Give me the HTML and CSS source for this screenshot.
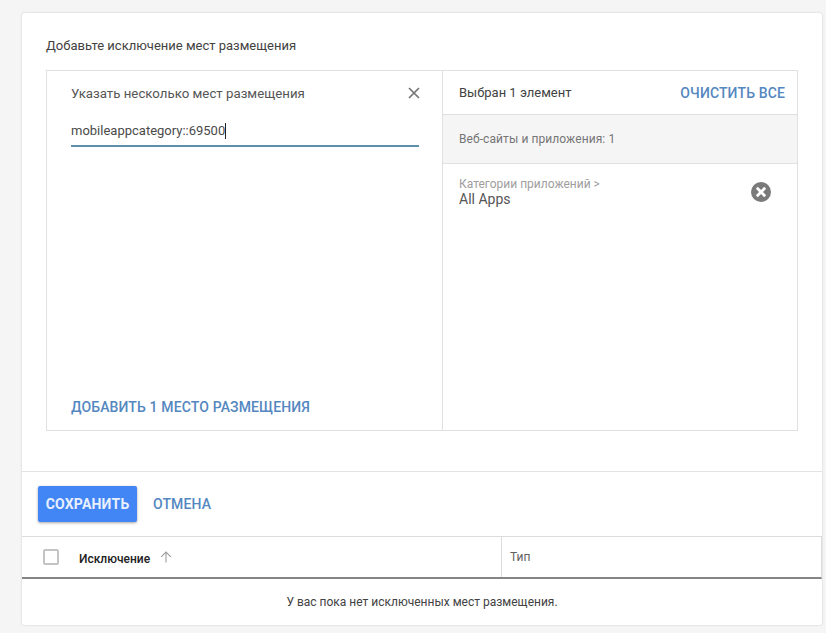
FILE: index.html
```html
<!DOCTYPE html>
<html lang="ru">
<head>
<meta charset="utf-8">
<title>Исключение мест размещения</title>
<link rel="stylesheet" href="styles.css">
</head>
<body>
<main class="card">
  <section class="editor">
    <h1 class="title">Добавьте исключение мест размещения</h1>
    <div class="panel">
      <div class="left">
        <div class="left-head">
          <span>Указать несколько мест размещения</span>
          <svg class="close" width="12" height="12" viewBox="0 0 12 12"><path d="M1 1l10 10M11 1L1 11" stroke="#757575" stroke-width="1.7" fill="none"/></svg>
        </div>
        <div class="field"><span>mobileappcategory::69500</span><i class="caret"></i></div>
        <a class="link add">ДОБАВИТЬ 1 МЕСТО РАЗМЕЩЕНИЯ</a>
      </div>
      <div class="right">
        <div class="right-head">
          <span>Выбран 1 элемент</span>
          <a class="link">ОЧИСТИТЬ ВСЕ</a>
        </div>
        <div class="group">Веб-сайты и приложения: 1</div>
        <div class="item">
          <div class="item-text">
            <div class="crumb">Категории приложений &gt;</div>
            <div class="name">All Apps</div>
          </div>
          <svg class="remove" width="20" height="20" viewBox="0 0 20 20"><circle cx="10" cy="10" r="10" fill="#7a7a7a"/><path d="M5.800 5.800l8.400 8.400M14.200 5.800l-8.400 8.400" stroke="#fff" stroke-width="2.800" fill="none"/></svg>
        </div>
      </div>
    </div>
  </section>
  <div class="actions">
    <button class="save" type="button">СОХРАНИТЬ</button>
    <a class="link cancel">ОТМЕНА</a>
  </div>
  <div class="table">
    <div class="thead">
      <div class="th first">
        <span class="check"></span>
        <span class="th-label">Исключение</span>
        <svg class="sort" width="12" height="12" viewBox="0 0 12 12"><path d="M6 11.500V1M1.200 5.800L6 1l4.800 4.800" stroke="#9e9e9e" stroke-width="1.100" fill="none"/></svg>
      </div>
      <div class="th second">Тип</div>
    </div>
    <div class="empty">У вас пока нет исключенных мест размещения.</div>
  </div>
</main>
</body>
</html>
```
FILE: styles.css
```css
* { box-sizing: border-box; }
html, body { margin: 0; height: 100%; }
body {
  background: #f5f5f5;
  padding: 13px 4px 0 22px;
  font-family: Roboto, "Liberation Sans", sans-serif;
  color: #424242;
  overflow: hidden;
}
.card {
  width: 800px;
  height: 612px;
  background: #fff;
  box-shadow: 0 0 2px rgba(0,0,0,.22);
  display: flex;
  flex-direction: column;
  border-radius: 2px;
}
.editor {
  height: 459px;
  padding: 25px 24px 0 24px;
  border-bottom: 1px solid #e3e3e3;
}
.title {
  margin: 0;
  font-size: 13px;
  line-height: 15px;
  font-weight: 400;
  color: #424242;
  height: 32px;
}
.panel {
  width: 752px;
  height: 361px;
  border: 1px solid #e0e0e0;
  display: flex;
}
.left {
  width: 396px;
  border-right: 1px solid #e0e0e0;
  padding: 14px 23px 15px 24px;
  display: flex;
  flex-direction: column;
}
.left-head {
  display: flex;
  justify-content: space-between;
  align-items: center;
  height: 16px;
  font-size: 13.25px;
  color: #555;
}
.close { margin-right: -1px; }
.field {
  margin-top: 14px;
  height: 32px;
  border-bottom: 2px solid #5f8ea8;
  font-size: 13px;
  line-height: 16px;
  color: #4a4a4a;
  display: flex;
  align-items: flex-start;
  padding-top: 8px;
}
.caret {
  display: block;
  width: 1px;
  height: 16px;
  background: #222;
}
.link {
  font-size: 14px;
  font-weight: 500;
  letter-spacing: .13px;
  color: #5487c0;
  line-height: 16px;
  white-space: nowrap;
}
.add { margin-top: auto; }
.right { flex: 1; display: flex; flex-direction: column; }
.right-head {
  height: 44px;
  padding: 0 12px 0 16px;
  display: flex;
  justify-content: space-between;
  align-items: center;
  font-size: 13px;
  color: #424242;
  border-bottom: 1px solid #e0e0e0;
}
.group {
  height: 49px;
  padding: 0 16px;
  display: flex;
  align-items: center;
  background: #f5f5f5;
  border-bottom: 1px solid #e0e0e0;
  font-size: 12px;
  letter-spacing: .08px;
  color: #757575;
}
.item {
  display: flex;
  justify-content: space-between;
  padding: 13px 26px 0 16px;
}
.crumb { font-size: 12px; line-height: 14px; color: #9e9e9e; }
.name { font-size: 14px; line-height: 16px; color: #555; }
.remove { margin-top: 5px; }
.actions {
  height: 64px;
  padding: 14px 16px 0;
  display: flex;
  align-items: flex-start;
  gap: 16px;
}
.save {
  width: 99px;
  height: 36px;
  border: 0;
  border-radius: 2px;
  background: #4285f4;
  color: #e8f0fe;
  font: 700 14px/16px Roboto, "Liberation Sans", sans-serif;
  letter-spacing: .2px;
  box-shadow: 0 1px 3px rgba(0,0,0,.35);
  padding: 0;
}
.cancel { line-height: 36px; }
.table {
  flex: 1;
  display: flex;
  flex-direction: column;
  border-top: 1px solid #dcdcdc;
}
.thead {
  height: 42px;
  display: flex;
  border-bottom: 2px solid #858585;
  border-right: 1px solid #dcdcdc;
}
.th { display: flex; align-items: center; font-size: 12px; }
.first {
  width: 480px;
  border-right: 1px solid #dcdcdc;
  padding-left: 21px;
}
.check {
  width: 16px;
  height: 16px;
  border: 2px solid #c4c4c4;
  border-radius: 2px;
  margin-right: 20px;
}
.th-label { font-weight: 500; color: #212121; margin-top: 4px; }
.sort { margin-left: 10px; }
.second { flex: 1; padding-left: 8px; color: #616161; align-items: flex-start; padding-top: 13px; }
.empty {
  flex: 1;
  display: flex;
  align-items: center;
  justify-content: center;
  font-size: 12px;
  color: #424242;
}
```
